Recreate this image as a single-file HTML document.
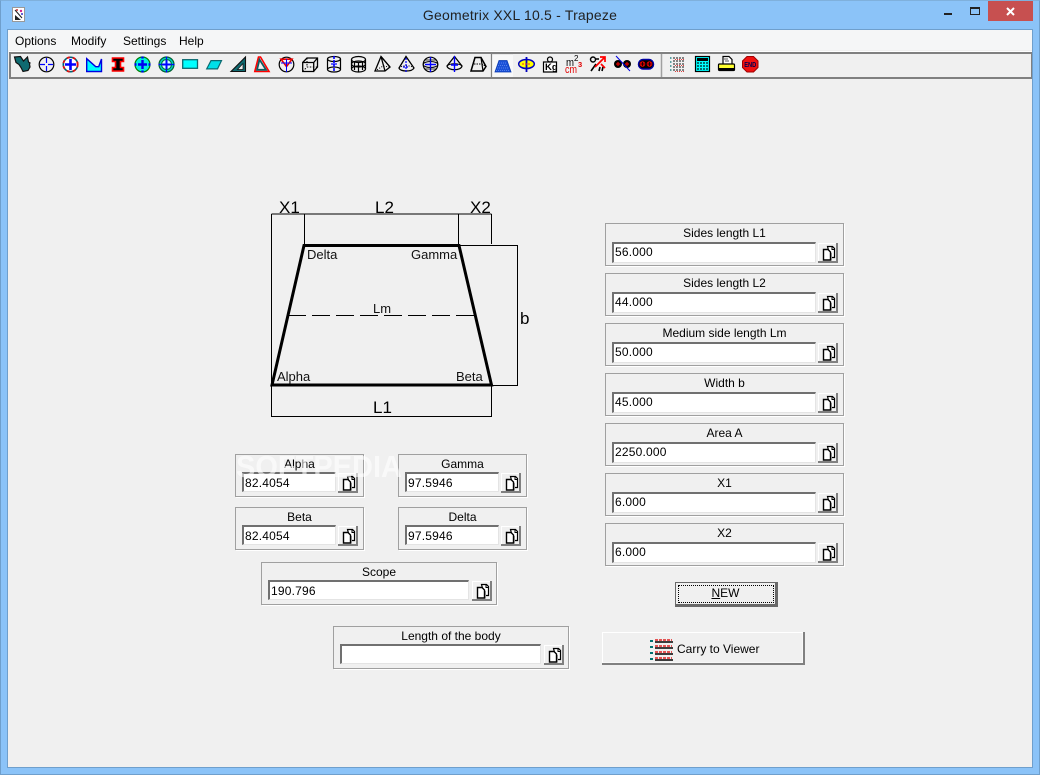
<!DOCTYPE html>
<html><head><meta charset="utf-8"><title>Geometrix XXL 10.5 - Trapeze</title>
<style>
html,body{margin:0;padding:0;width:1040px;height:775px;overflow:hidden;background:#8bc3f8;font-family:"Liberation Sans",sans-serif;font-size:12px;color:#000}
div,span{position:absolute;box-sizing:border-box}
.frame{left:0;top:0;width:1040px;height:775px;border:1px solid #6f9fcc;border-top-color:#7fb0dc}
.title{left:0;width:1040px;top:6px;text-align:center;font-size:14px;line-height:18px;color:#222;letter-spacing:.2px}
.client{left:8px;top:30px;width:1024px;height:737px;background:#f0f0f0;box-shadow:0 0 0 1px #6f9fcc}
.menu{left:8px;top:30px;width:1024px;height:20px;background:#f5f6f7}
.m{top:34px;line-height:14px}
.tb{left:9px;top:52px;width:1023px;height:27px;border:2px solid #808080;border-right-width:1px;box-shadow:0 -1px 0 #fff}
.g{border:1px solid #a0a0a0;box-shadow:1px 1px 0 #fff;height:43px}
.l{left:0;right:0;top:2px;text-align:center;line-height:14px;white-space:nowrap}
.i{height:21px;top:18px;left:6px;background:#fff;border-top:2px solid #707070;border-left:2px solid #707070;border-right:1px solid #e4e4e4;border-bottom:1px solid #e4e4e4;line-height:17px;padding-left:1px;font-size:12px;letter-spacing:.2px}
.b{width:20px;height:20px;top:19px;background:#f0f0f0;border-right:2px solid #808080;border-bottom:2px solid #808080;box-shadow:inset 1px 1px 0 #fff}
.b svg{position:absolute;left:3px;top:2px}
.s .i{top:17px;height:20px;line-height:18px}
.s .b{top:18px}
.new{left:675px;top:582px;width:103px;height:25px;background:#f0f0f0;border:1px solid #696969;border-right-width:3px;border-bottom-width:3px;text-align:center;line-height:21px}
.new i{position:absolute;left:2px;top:2px;right:1px;bottom:1px;border:1px dotted #000}
.new span{position:static;font-style:normal}
.carry{left:602px;top:632px;width:203px;height:33px;background:#f0f0f0;border-right:2px solid #808080;border-bottom:2px solid #808080;box-shadow:inset 1px 1px 0 #fff,inset 0 0 0 1px #f8f8f8}
.carry span{left:75px;top:10px;line-height:14px;white-space:nowrap}
svg text{font-family:"Liberation Sans",sans-serif}
</style></head>
<body>
<svg width="0" height="0" style="position:absolute"><defs>
<symbol id="c" viewBox="0 0 16 16"><path d="M6.500 1.500h5l2 2v9h-4z" fill="#fff" stroke="#000" stroke-width="1.200"/><path d="M11 1.500v3h2.500" fill="none" stroke="#000"/><path d="M2.500 4.500h4.500l2.500 2.500v8h-7z" fill="#fff" stroke="#000" stroke-width="1.400"/><path d="M10.500 8v7.500" stroke="#888"/></symbol>
</defs></svg>
<div class="frame"></div>

<!-- title bar -->
<svg style="position:absolute;left:12px;top:7px" width="14" height="16"><rect x=".5" y=".5" width="12" height="14" fill="#fff" stroke="#999"/><path d="M3 13V8l6 5z" fill="#222"/><path d="M3 3l7 8" stroke="#222"/><circle cx="9" cy="4" r="1.200" fill="#d0208a"/><circle cx="5" cy="3" r="1" fill="#c33"/><circle cx="10" cy="7" r="1" fill="#33c"/></svg>
<div class="title">Geometrix XXL 10.5 - Trapeze</div>
<svg style="position:absolute;left:944px;top:1px" width="90" height="20">
<rect x="0" y="12" width="8" height="2" fill="#222"/>
<rect x="26.500" y="6.500" width="9" height="7" fill="none" stroke="#222"/><rect x="26" y="6" width="10" height="2" fill="#222"/>
<rect x="44" y="0" width="45" height="20" fill="#c75050"/>
<path d="M63 7l7 7M70 7l-7 7" stroke="#fff" stroke-width="2"/>
</svg>

<div class="client"></div>
<div class="menu"></div>
<div class="m" style="left:15px">Options</div>
<div class="m" style="left:71px">Modify</div>
<div class="m" style="left:123px">Settings</div>
<div class="m" style="left:179px">Help</div>
<div class="tb"></div>

<!-- toolbar -->
<svg style="position:absolute;left:0;top:50px" width="1040" height="30">
<rect x="491" y="3" width="22" height="24" fill="#f8f8f8"/>
<path d="M491.500 27V3.500h21.500" fill="none" stroke="#808080" stroke-width="1.200"/>
<path d="M661.500 4v23" stroke="#a0a0a0" stroke-width="1.500"/>
<g transform="translate(0,6)">
<g transform="translate(14,0)"><path d="M.5 1l6-.5 3 4.500 4-4 1 5 1.500 1-.5 1 .5 3-2 3.500-5 1-2-4-2-3-3-2z" fill="#0f6a70" stroke="#111" stroke-width="1.200"/></g>
<g transform="translate(38,0)" fill="none"><circle cx="8.500" cy="8.500" r="7.300" stroke="#000" stroke-width="1.200"/><path d="M8.500 2v5M8.500 10v5M2 8.500h5M10 8.500h5" stroke="#00f" stroke-width="1.200"/></g>
<g transform="translate(62,0)" fill="none"><circle cx="8.500" cy="8.500" r="7.200" fill="#fff" stroke="#006070" stroke-width="1.600"/><circle cx="8.500" cy="8.500" r="7.200" stroke="#e01010" stroke-width="1.800" stroke-dasharray="3 3"/><path d="M8.500 3v11M3 8.500h11" stroke="#00f" stroke-width="2.600"/></g>
<g transform="translate(86,2)"><path d="M.7.700l9 8h3L15.500 1v12.500H.7z" fill="#00ffff" stroke="#0000e0" stroke-width="1.400"/></g>
<g transform="translate(110,1)"><path d="M2.500 1h11v3.500h-3v6h3V14h-11v-3.500h3v-6h-3z" fill="#000" stroke="#f00" stroke-width="1.600"/></g>
<g transform="translate(134,0)"><circle cx="8.500" cy="8.500" r="7.500" fill="#00f0e0" stroke="#008000" stroke-width="1.200"/><path d="M8.500 4v9M4 8.500h9M8.500 .5v2M8.500 14.500v2M.5 8.500h2M14.500 8.500h2" stroke="#0000f0" stroke-width="2.400"/></g>
<g transform="translate(158,0)"><circle cx="8.500" cy="8.500" r="7.500" fill="#00d0c0" stroke="#006030" stroke-width="1.200"/><circle cx="8.500" cy="8.500" r="5" fill="#d0ffff" stroke="#007040"/><path d="M8.500 4v9M4 8.500h9" stroke="#00f" stroke-width="2"/><path d="M8.500 .5v3M8.500 13.500v3M.5 8.500h3M13.500 8.500h3" stroke="#00f" stroke-width="1.200"/></g>
<g transform="translate(182,3)"><rect x=".7" y=".7" width="14.800" height="8.600" fill="#00ffff" stroke="#0a6a70" stroke-width="1.300"/></g>
<g transform="translate(206,4)"><path d="M5 .6h10.500l-4 8.300H.7z" fill="#00e0e8" stroke="#0a6a70" stroke-width="1.200"/></g>
<g transform="translate(230,0)"><path d="M1 15.500L15.500 1v14.500z" fill="#0f6a70" stroke="#111" stroke-width="1.100"/><path d="M7.500 13.500l5.500-6v6z" fill="#f0f0f0" stroke="#111" stroke-width=".7"/></g>
<g transform="translate(254,0)"><path d="M.8 15.500L4.500 1h2L15 15.500z" fill="#f0f0f0" stroke="#f00" stroke-width="1.600"/><path d="M3 13.800L5.500 3.500l6.500 10.300z" fill="none" stroke="#0f5a60" stroke-width="1.800"/></g>
<g transform="translate(278,0)" fill="none"><circle cx="8.500" cy="8.500" r="7.300" stroke="#000" stroke-width="1.200"/><path d="M3 3.200h11L8.500 10.500z" stroke="#e00" stroke-width="1.600"/><path d="M8.500 3v13M3 7h11" stroke="#00f"/></g>
<g transform="translate(302,1)" fill="none" stroke="#000" stroke-width="1.300"><path d="M.7 5.500h11v9H.7zM.7 5.500L5 1h10.500v9l-4 4.500M11.700 5.500L15.500 1"/><path d="M.7 14.500L5 10h10.500M5 1v9" stroke-dasharray="1.500 1.500" stroke-width="1"/></g>
<g transform="translate(326,0)" fill="none"><ellipse cx="8" cy="3" rx="6.500" ry="2.500" stroke="#000" stroke-width="1.200"/><ellipse cx="8" cy="13.500" rx="6.500" ry="2.500" stroke="#000" stroke-width="1.200"/><path d="M1.500 3v10.500M14.500 3v10.500" stroke="#000" stroke-width="1.200"/><path d="M8 0v16" stroke="#00f" stroke-width="1.600" stroke-dasharray="3 1"/><path d="M5 8h6" stroke="#00f" stroke-width="1.200"/></g>
<g transform="translate(350,0)" fill="none" stroke="#000" stroke-width="1.200"><ellipse cx="8.500" cy="3.500" rx="7" ry="3"/><ellipse cx="8.500" cy="13" rx="7" ry="3"/><path d="M1.500 3.500v9.500M15.500 3.500v9.500"/><ellipse cx="8.500" cy="8" rx="7" ry="3"/><path d="M4.500 5v9M12.500 5v9M8.500 6v10"/></g>
<g transform="translate(374,0)" fill="none" stroke="#000" stroke-width="1.300"><path d="M7 .5L1 15h10l5-4z"/><path d="M7 .5l4 14.500M7 .5l9 10.500"/><path d="M1 15l8-5 7 1" stroke-dasharray="1 1.500" stroke-width="1"/></g>
<g transform="translate(398,0)" fill="none"><path d="M8 .5L1 12c1 4 13 4 15 0z" stroke="#000" stroke-width="1.300"/><path d="M1 12c3-3 12-3 15 0" stroke="#000" stroke-dasharray="1 1.500"/><path d="M8 2v14M5 11h6" stroke="#00f" stroke-width="1.200" stroke-dasharray="2 1"/></g>
<g transform="translate(422,0)" fill="none"><circle cx="8.500" cy="8.500" r="7.300" stroke="#000" stroke-width="1.200"/><ellipse cx="8.500" cy="8.500" rx="7.300" ry="3" stroke="#000"/><path d="M8.500 1v15M3 8.500h11" stroke="#00f" stroke-width="1.400"/><path d="M3 4h11M3 13h11" stroke="#000" stroke-width=".8"/></g>
<g transform="translate(446,0)" fill="none"><path d="M8.500 .5L1 10c1 5 14 5 15 0z" stroke="#000" stroke-width="1.300"/><path d="M1 10c3-3 12-3 15 0" stroke="#000"/><path d="M8.500 0v16M5 9h7" stroke="#00f" stroke-width="1.400"/></g>
<g transform="translate(470,0)" fill="none" stroke="#000"><path d="M5 1.500h6l5 9-3 4.500H1z" stroke-width="1.500"/><path d="M5 1.500L1 15M11 1.500L13 15" stroke-width="1.200"/><path d="M4 8h8l4 2.500" stroke-dasharray="1.500 1"/></g>
<g transform="translate(495,4)"><path d="M4 .5h8L16 12H0z" fill="#1a50d8" stroke="#0a3ab0" stroke-width=".8"/><path d="M4 3h8M3 5.500h10M2 8h12M1 10.500h14" stroke="#6a90f0" stroke-width=".8" stroke-dasharray="1 1"/></g>
<g transform="translate(518,0)"><ellipse cx="8.500" cy="8" rx="7.800" ry="4.500" fill="#ffff00" stroke="#0000c0" stroke-width="1.500"/><path d="M8.500 1v15" stroke="#0000c0" stroke-width="1.800"/><path d="M4 8h9" stroke="#f03030" stroke-dasharray="2 1"/></g>
<g transform="translate(542,0)"><path d="M1.500 6h13v10h-13z" fill="#fff" stroke="#000" stroke-width="1.200"/><circle cx="8" cy="3.500" r="2.500" fill="none" stroke="#000" stroke-width="1.200"/><text x="3" y="14" font-size="9.500" fill="#000" font-weight="bold">Kg</text></g>
<g transform="translate(565,-1)"><text x="1" y="11" font-size="11" fill="#000" textLength="8" lengthAdjust="spacingAndGlyphs">m</text><text x="9" y="6" font-size="8" fill="#000">2</text><text x="0" y="18" font-size="11" fill="#e00000" textLength="12" lengthAdjust="spacingAndGlyphs">cm</text><text x="13" y="12" font-size="7.500" font-weight="bold" fill="#e00000">3</text></g>
<g transform="translate(590,0)" fill="none"><circle cx="3" cy="3.500" r="2.500" stroke="#000" stroke-width="1.400"/><path d="M6 3h3M1 15l5-7M9 15l1-4M12 15l1-4" stroke="#000" stroke-width="1.600"/><path d="M5 11L15 1M10 1h5v5M11 8l4 4" stroke="#f00" stroke-width="1.700"/></g>
<g transform="translate(614,0)"><circle cx="4" cy="8" r="4" fill="#000"/><circle cx="13" cy="8" r="4" fill="#000"/><path d="M2 8h4M11 8h4M4 6v4M13 6v4" stroke="#e00000" stroke-width="1.200"/><path d="M2 0l14 15" stroke="#0000e0"/></g>
<g transform="translate(638,3)"><rect x=".5" y=".5" width="15" height="9.500" rx="4.500" fill="#000" stroke="#0000a0" stroke-width="1.400"/><circle cx="4.500" cy="5" r="2.800" fill="#e00000"/><circle cx="11.500" cy="5" r="2.800" fill="#e00000"/><path d="M4.500 3v4M11.500 3v4M2.500 5h4M9.500 5h4" stroke="#000" stroke-width=".8"/></g>
<g transform="translate(670,0)"><path d="M3 2h12M3 5h12M3 8h12M3 11h12M3 14h12" stroke="#404040" stroke-width="1.200" stroke-dasharray="2 1"/><path d="M5 3.500h10M5 9.500h10M5 15.500h10" stroke="#e04040" stroke-dasharray="1 1"/><path d="M0 2h1.500M0 6h1.500M0 10h1.500M0 14h1.500" stroke="#007070" stroke-width="1.300"/></g>
<g transform="translate(695,0)"><rect x=".5" y=".5" width="14" height="15" fill="#00ffff" stroke="#000" stroke-width="1.200"/><rect x="2" y="2" width="11" height="3" fill="#000"/><path d="M2 7h11M2 10h11M2 13h11" stroke="#004040" stroke-dasharray="2 1" stroke-width="1.500"/></g>
<g transform="translate(718,0)"><path d="M5 .5h6l3 3v5H5z" fill="#fff" stroke="#000" stroke-width="1.200"/><rect x=".5" y="8" width="16" height="6.500" rx="1" fill="#ffff30" stroke="#000" stroke-width="1.200"/><rect x=".5" y="12" width="16" height="3" fill="#000"/><path d="M6 3h4M7 5h4" stroke="#555"/></g>
<g transform="translate(742,0)"><path d="M5 .5h6.500l4.500 4.500v6.500L11.500 16H5L.5 11.500V5z" fill="#f01010" stroke="#a00000"/><text x="2.200" y="11" font-size="7" font-weight="bold" fill="#000050" textLength="12" lengthAdjust="spacingAndGlyphs">END</text></g>
</g>
</svg>

<!-- drawing -->
<svg style="position:absolute;left:0;top:0" width="1040" height="775">
<g stroke="#000" fill="none">
<path d="M271.500 214h220M271.500 214v203M491.500 214v30M491.500 385v32M304.500 214v31M458.500 214v31M271.500 416.500h220M459 245.500h59M491 385.500h27M517.500 245v141"/>
<path d="M288 315.500h186" stroke-dasharray="18 6"/>
<path d="M304 245.500h155L491.500 385H272z" stroke-width="3"/>
</g>
<g fill="#000" font-size="17">
<text x="279" y="213">X1</text><text x="375" y="213">L2</text><text x="470" y="213">X2</text><text x="373" y="413">L1</text><text x="520" y="324">b</text>
</g>
<g fill="#111" font-size="13">
<text x="307" y="259">Delta</text><text x="411" y="259">Gamma</text><text x="373" y="313">Lm</text><text x="277" y="381">Alpha</text><text x="456" y="381">Beta</text>
</g>
</svg>

<!-- left groups -->
<div class="g s" style="left:235px;top:454px;width:129px"><div class="l">Alpha</div><div class="i" style="width:94px">82.4054</div><div class="b" style="left:102px"><svg width="16" height="16"><use href="#c"/></svg></div></div>
<div class="g s" style="left:398px;top:454px;width:129px"><div class="l">Gamma</div><div class="i" style="width:94px">97.5946</div><div class="b" style="left:102px"><svg width="16" height="16"><use href="#c"/></svg></div></div>
<div class="g s" style="left:235px;top:507px;width:129px"><div class="l">Beta</div><div class="i" style="width:94px">82.4054</div><div class="b" style="left:102px"><svg width="16" height="16"><use href="#c"/></svg></div></div>
<div class="g s" style="left:398px;top:507px;width:129px"><div class="l">Delta</div><div class="i" style="width:94px">97.5946</div><div class="b" style="left:102px"><svg width="16" height="16"><use href="#c"/></svg></div></div>
<div class="g s" style="left:261px;top:562px;width:236px"><div class="l">Scope</div><div class="i" style="width:201px">190.796</div><div class="b" style="left:210px"><svg width="16" height="16"><use href="#c"/></svg></div></div>
<div class="g s" style="left:333px;top:626px;width:236px"><div class="l">Length of the body</div><div class="i" style="width:201px"></div><div class="b" style="left:210px"><svg width="16" height="16"><use href="#c"/></svg></div></div>

<!-- right groups -->
<div class="g" style="left:605px;top:223px;width:239px"><div class="l">Sides length L1</div><div class="i" style="width:204px">56.000</div><div class="b" style="left:212px"><svg width="16" height="16"><use href="#c"/></svg></div></div>
<div class="g" style="left:605px;top:273px;width:239px"><div class="l">Sides length L2</div><div class="i" style="width:204px">44.000</div><div class="b" style="left:212px"><svg width="16" height="16"><use href="#c"/></svg></div></div>
<div class="g" style="left:605px;top:323px;width:239px"><div class="l">Medium side length Lm</div><div class="i" style="width:204px">50.000</div><div class="b" style="left:212px"><svg width="16" height="16"><use href="#c"/></svg></div></div>
<div class="g" style="left:605px;top:373px;width:239px"><div class="l">Width b</div><div class="i" style="width:204px">45.000</div><div class="b" style="left:212px"><svg width="16" height="16"><use href="#c"/></svg></div></div>
<div class="g" style="left:605px;top:423px;width:239px"><div class="l">Area A</div><div class="i" style="width:204px">2250.000</div><div class="b" style="left:212px"><svg width="16" height="16"><use href="#c"/></svg></div></div>
<div class="g" style="left:605px;top:473px;width:239px"><div class="l">X1</div><div class="i" style="width:204px">6.000</div><div class="b" style="left:212px"><svg width="16" height="16"><use href="#c"/></svg></div></div>
<div class="g" style="left:605px;top:523px;width:239px"><div class="l">X2</div><div class="i" style="width:204px">6.000</div><div class="b" style="left:212px"><svg width="16" height="16"><use href="#c"/></svg></div></div>

<div class="new"><i></i><span><u>N</u>EW</span></div>
<div class="carry"><span>Carry to Viewer</span>
<svg style="position:absolute;left:47px;top:7px" width="24" height="24"><path d="M6 3h18M6 9h18M6 15h18M6 21h18" stroke="#000" stroke-width="1.600"/><path d="M6 1h17M6 7h17M6 13h17M6 19h17" stroke="#e02020" stroke-width="1.500" stroke-dasharray="3 1"/><path d="M1 2h3M1 8h3M1 14h3M1 20h3" stroke="#007070" stroke-width="2"/></svg></div>

<!-- watermark -->
<svg style="position:absolute;left:0;top:0;pointer-events:none" width="1040" height="775"><text x="236" y="477" font-size="31" font-weight="bold" fill="#fff" fill-opacity=".6" textLength="166" lengthAdjust="spacingAndGlyphs">SOFTPEDIA</text></svg>
</body></html>
